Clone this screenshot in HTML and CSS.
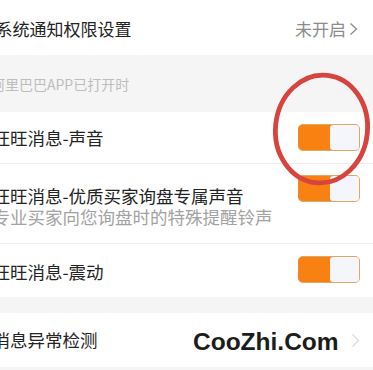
FILE: index.html
```html
<!DOCTYPE html>
<html lang="zh-CN">
<head>
<meta charset="utf-8">
<title>消息通知设置</title>
<link rel="stylesheet" href="styles.css">
</head>
<body>
<div class="page">
  <div class="row row-top">
    <span class="label label-top">系统通知权限设置</span>
    <span class="value">未开启<svg class="chev" width="9" height="14" viewBox="0 0 9 14"><polyline points="1.5,1.5 7.5,7 1.5,12.5" fill="none" stroke="currentColor" stroke-width="1.3"/></svg></span>
  </div>
  <div class="section-head"><span class="section-text">阿里巴巴APP已打开时</span></div>
  <div class="row row-toggle row-sound">
    <span class="label">旺旺消息-声音</span>
    <span class="toggle"><span class="knob"></span></span>
  </div>
  <div class="divider"></div>
  <div class="row row-toggle row-premium">
    <div class="label-block">
      <div class="label">旺旺消息-优质买家询盘专属声音</div>
      <div class="sub">专业买家向您询盘时的特殊提醒铃声</div>
    </div>
    <span class="toggle"><span class="knob"></span></span>
  </div>
  <div class="divider"></div>
  <div class="row row-toggle row-vibrate">
    <span class="label">旺旺消息-震动</span>
    <span class="toggle"><span class="knob"></span></span>
  </div>
  <div class="gap"></div>
  <div class="row row-last">
    <span class="label">消息异常检测</span>
    <svg class="chev chev-light" width="9" height="15" viewBox="0 0 9 15"><polyline points="1.5,1.5 7.5,7.5 1.5,13.5" fill="none" stroke="currentColor" stroke-width="1.2"/></svg>
    <span class="watermark">CooZhi.Com</span>
  </div>
  <div class="bottom"></div>
  <svg class="circle" width="105" height="122" viewBox="0 0 105 122"><ellipse cx="53.5" cy="61" rx="46" ry="54" transform="rotate(6 53.5 61)" fill="none" stroke="#d6443d" stroke-width="4.8"/></svg>
</div>
</body>
</html>
```
FILE: styles.css
```css
html, body {
  margin: 0;
  padding: 0;
  background: #ffffff;
}
.page {
  position: relative;
  width: 373px;
  height: 370px;
  overflow: hidden;
  font-family: "Noto Sans CJK SC", "Noto Sans", sans-serif;
  color: #232323;
  background: #ffffff;
}
.row {
  display: flex;
  justify-content: space-between;
  box-sizing: border-box;
  background: #ffffff;
  padding-right: 14px;
}
.label {
  font-size: 17.5px;
  line-height: 24px;
  margin-left: -7.5px;
  white-space: nowrap;
}
.row-top {
  height: 55px;
  align-items: center;
  padding-top: 3px;
  padding-right: 15px;
}
.label-top {
  margin-left: -4.5px;
  font-size: 17px;
}
.value {
  display: flex;
  align-items: center;
  gap: 3px;
  font-size: 17px;
  line-height: 24px;
  color: #8c8c8c;
}
.chev {
  display: block;
  color: #8c8c8c;
}
.chev-light {
  color: #d9d9d9;
}
.section-head {
  height: 57px;
  display: flex;
  align-items: center;
  background: #f5f5f5;
}
.section-text {
  font-size: 14px;
  line-height: 20px;
  color: #bdbdbd;
  margin-left: -9px;
}
.row-toggle {
  align-items: flex-start;
  padding-top: 12px;
  padding-right: 13px;
}
.row-sound {
  height: 51px;
}
.row-sound .label {
  margin-top: 2px;
}
.row-premium {
  height: 79px;
  padding-top: 11px;
}
.label-block {
  margin-top: 10px;
}
.label-block .label {
  display: block;
  line-height: 22px;
}
.sub {
  font-size: 17.5px;
  line-height: 20px;
  color: #a3a3a3;
  margin-left: -7.5px;
  white-space: nowrap;
}
.row-vibrate {
  height: 53px;
}
.row-vibrate .label {
  margin-top: 4px;
}
.toggle {
  display: flex;
  justify-content: flex-end;
  box-sizing: border-box;
  width: 62px;
  height: 27px;
  border: 1.5px solid #d9a968;
  border-left-color: #f0892a;
  border-radius: 5px;
  background: #f98112;
  flex-shrink: 0;
}
.knob {
  width: 29px;
  background: #f4f6fb;
  border-radius: 3px;
}
.divider {
  height: 1px;
  background: #ececec;
}
.gap {
  height: 16px;
  background: #f5f5f5;
}
.row-last {
  position: relative;
  height: 54px;
  align-items: center;
  padding-right: 13px;
}
.watermark {
  position: absolute;
  left: 193px;
  top: 17px;
  font-family: "Liberation Sans", Arial, sans-serif;
  font-weight: bold;
  font-size: 24.5px;
  line-height: 24.5px;
  color: #1c1c1c;
}
.bottom {
  height: 3px;
  background: #f5f5f5;
}
.circle {
  position: absolute;
  left: 268px;
  top: 68px;
}
```
